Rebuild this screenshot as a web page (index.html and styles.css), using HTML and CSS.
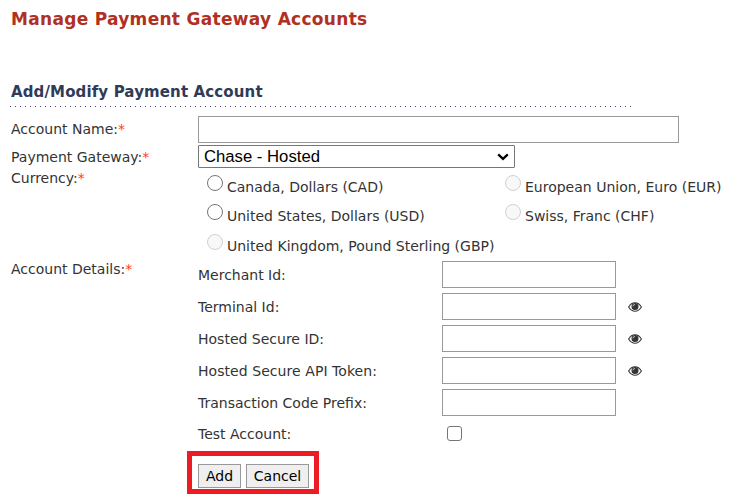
FILE: index.html
```html
<!DOCTYPE html>
<html lang="en">

<head>
  <meta charset="UTF-8" />
  <meta name="viewport" content="width=device-width, initial-scale=1.0" />
  <title>Manage Payment Gateway Accounts</title>
  <link rel="stylesheet" href="styles.css">
</head>

<body>
  <svg class="icon-defs" width="0" height="0">
    <symbol id="eye" viewBox="0 0 14 10">
      <path d="M0.6 5 Q3.2 0.8 7 0.8 T13.4 5 Q10.8 9.2 7 9.2 T0.6 5 Z" fill="#fff" stroke="#333" stroke-width="1.1" />
      <circle cx="7" cy="4.4" r="3.5" fill="#333" />
      <path d="M5 4.4 Q5 2.5 7 2.4" fill="none" stroke="#ddd" stroke-width="0.8" />
    </symbol>
  </svg>

  <h1>Manage Payment Gateway Accounts</h1>
  <h2>Add/Modify Payment Account</h2>

  <form id="account-form">
    <div class="row row-name">
      <label class="title" for="name">Account Name:<i>*</i></label>
      <input id="name" class="name" type="text" name="name">
    </div>
    <div class="row row-gateway">
      <label class="title" for="gateway">Payment Gateway:<i>*</i></label>
      <div class="select">
        <select id="gateway" name="gateway">
          <option>Chase - Hosted</option>
        </select>
        <svg class="arrow" width="12" height="8" viewBox="0 0 12 8">
          <path d="M1.2 1.3 L6 5.8 L10.8 1.3" fill="none" stroke="#000" stroke-width="2.3" />
        </svg>
      </div>
    </div>
    <div class="row row-currency">
      <div class="title">Currency:<i>*</i></div>
      <div class="currencies">
        <label><input type="radio" name="currency"><span>Canada, Dollars (CAD)</span></label>
        <label><input type="radio" name="currency" disabled><span>European Union, Euro (EUR)</span></label>
        <label><input type="radio" name="currency"><span>United States, Dollars (USD)</span></label>
        <label><input type="radio" name="currency" disabled><span>Swiss, Franc (CHF)</span></label>
        <label><input type="radio" name="currency" disabled><span>United Kingdom, Pound Sterling (GBP)</span></label>
      </div>
    </div>
    <div class="row row-details">
      <div class="title">Account Details:<i>*</i></div>
      <div class="details">
        <div class="field">
          <label for="merchant">Merchant Id:</label>
          <input id="merchant" type="text">
        </div>
        <div class="field">
          <label for="terminal">Terminal Id:</label>
          <input id="terminal" type="password">
          <svg class="eye"><use href="#eye" /></svg>
        </div>
        <div class="field">
          <label for="secure-id">Hosted Secure ID:</label>
          <input id="secure-id" type="password">
          <svg class="eye"><use href="#eye" /></svg>
        </div>
        <div class="field">
          <label class="wide" for="token">Hosted Secure API Token:</label>
          <input id="token" type="password">
          <svg class="eye"><use href="#eye" /></svg>
        </div>
        <div class="field">
          <label for="prefix">Transaction Code Prefix:</label>
          <input id="prefix" type="text">
        </div>
        <div class="field field-test">
          <label for="test">Test Account:</label>
          <input id="test" type="checkbox">
        </div>
      </div>
    </div>
    <div class="buttons">
      <button type="submit" class="addbtn">Add</button>
      <button type="button" class="cancelbtn">Cancel</button>
    </div>
  </form>
</body>

</html>
```
FILE: styles.css
```css
* {
  box-sizing: border-box;
}

body {
  margin: 0;
  padding: 8px 0 0 10px;
  background: #fff;
  color: #333;
  font-family: Verdana, "DejaVu Sans", sans-serif;
  font-size: 14px;
  line-height: 20px;
  white-space: nowrap;
  overflow: hidden;
}

.icon-defs {
  display: none;
}

h1 {
  margin: 0;
  height: 74px;
  color: #b03024;
  font-size: 17px;
  line-height: 22px;
  letter-spacing: 0.3px;
  text-indent: 1px;
}

h2 {
  margin: 0;
  width: 622px;
  height: 25px;
  color: #2f3b59;
  font-size: 15px;
  line-height: 20px;
  letter-spacing: 0.13px;
  text-indent: 1px;
  /* dotted rule under the section title */
  background: repeating-linear-gradient(90deg, #4b4470 0 1px, transparent 1px 5px) 0 24px / 100% 1px no-repeat;
}

input[type=text],
input[type=password] {
  width: 174px;
  height: 27px;
  margin: 0;
  border: 1px solid #999;
  background: #fff;
}

.row {
  display: grid;
  grid-template-columns: 188px 1fr;
  align-items: start;
}

.title {
  padding-left: 1px;
}

.title i {
  color: #ff3d1f;
  font-style: normal;
}

.row-name {
  height: 29px;
  margin-top: 9px;
}

.row-name .title {
  padding-top: 3px;
}

input.name {
  width: 481px;
}

.row-gateway {
  height: 23px;
}

.row-gateway .title {
  padding-top: 2px;
}

.select {
  position: relative;
  width: 317px;
  height: 23px;
}

select {
  appearance: none;
  display: block;
  width: 317px;
  height: 23px;
  padding: 0 5px;
  border: 1px solid #767676;
  border-radius: 1px;
  background: #fff;
  color: #000;
  font-family: "Liberation Sans", Arial, sans-serif;
  font-size: 16.7px;
  line-height: 20px;
}

.arrow {
  position: absolute;
  right: 6px;
  top: 8px;
}

.row-currency {
  height: 91px;
}

.currencies {
  display: grid;
  grid-template-columns: 298px auto;
  grid-template-rows: 29px 30px 29px;
  padding: 7px 0 0 9px;
}

.currencies label {
  display: flex;
  align-items: flex-start;
}

.currencies span {
  padding-top: 2px;
}

/* Radio buttons, drawn flat */
input[type=radio] {
  appearance: none;
  flex: none;
  width: 16px;
  height: 16px;
  margin: 0 4px 0 0;
  border: 1px solid #767676;
  border-radius: 50%;
  background: #fff;
}

input[type=radio]:disabled {
  border-color: #d0d0d0;
  background: #f8f8f8;
}

.details {
  padding-top: 2px;
}

.field {
  display: grid;
  grid-template-columns: 244px 174px auto;
  align-items: center;
  height: 27px;
  margin-bottom: 5px;
}

.field .wide {
  letter-spacing: 0.06px;
}

.eye {
  width: 14px;
  height: 10px;
  margin-left: 12px;
}

.field-test {
  margin-bottom: 0;
  height: 25px;
}

input[type=checkbox] {
  appearance: none;
  width: 15px;
  height: 15px;
  margin: 0 0 0 5px;
  border: 1px solid #767676;
  border-radius: 3px;
  background: #fff;
}

/* Framed button bar */
.buttons {
  display: flex;
  gap: 5px;
  width: 132px;
  height: 43px;
  margin: 5px 0 0 177px;
  padding: 8px 0 0 6px;
  border: 5px solid #ed1c24;
}

button {
  height: 24px;
  padding: 0;
  border: 1px solid #999;
  background: #efefef;
  color: #000;
  font-family: inherit;
  font-size: 14px;
}

.addbtn {
  width: 43px;
}

.cancelbtn {
  width: 63px;
}
```
